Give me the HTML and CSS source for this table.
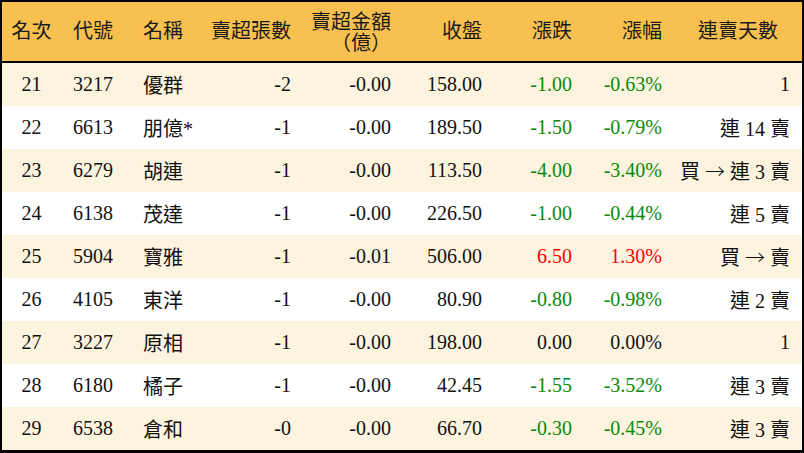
FILE: index.html
```html
<!DOCTYPE html>
<html lang="zh-Hant">
<head>
<meta charset="utf-8">
<title>賣超排行</title>
<link rel="stylesheet" href="styles.css">
</head>
<body>
<div class="board">
  <div class="row head">
    <div class="c c1">名次</div>
    <div class="c c2">代號</div>
    <div class="c c3">名稱</div>
    <div class="c num">賣超張數</div>
    <div class="c num two">賣超金額<br>（億）</div>
    <div class="c num">收盤</div>
    <div class="c num">漲跌</div>
    <div class="c num">漲幅</div>
    <div class="c c9h">連賣天數</div>
  </div>
  <div class="row alt">
    <div class="c c1">21</div><div class="c c2">3217</div><div class="c c3">優群</div>
    <div class="c num">-2</div><div class="c num">-0.00</div><div class="c num">158.00</div>
    <div class="c num dn">-1.00</div><div class="c num dn">-0.63%</div><div class="c num">1</div>
  </div>
  <div class="row">
    <div class="c c1">22</div><div class="c c2">6613</div><div class="c c3">朋億*</div>
    <div class="c num">-1</div><div class="c num">-0.00</div><div class="c num">189.50</div>
    <div class="c num dn">-1.50</div><div class="c num dn">-0.79%</div><div class="c num">連 14 賣</div>
  </div>
  <div class="row alt">
    <div class="c c1">23</div><div class="c c2">6279</div><div class="c c3">胡連</div>
    <div class="c num">-1</div><div class="c num">-0.00</div><div class="c num">113.50</div>
    <div class="c num dn">-4.00</div><div class="c num dn">-3.40%</div><div class="c num">買 <span class="arr">→</span> 連 3 賣</div>
  </div>
  <div class="row">
    <div class="c c1">24</div><div class="c c2">6138</div><div class="c c3">茂達</div>
    <div class="c num">-1</div><div class="c num">-0.00</div><div class="c num">226.50</div>
    <div class="c num dn">-1.00</div><div class="c num dn">-0.44%</div><div class="c num">連 5 賣</div>
  </div>
  <div class="row alt">
    <div class="c c1">25</div><div class="c c2">5904</div><div class="c c3">寶雅</div>
    <div class="c num">-1</div><div class="c num">-0.01</div><div class="c num">506.00</div>
    <div class="c num up">6.50</div><div class="c num up">1.30%</div><div class="c num">買 <span class="arr">→</span> 賣</div>
  </div>
  <div class="row">
    <div class="c c1">26</div><div class="c c2">4105</div><div class="c c3">東洋</div>
    <div class="c num">-1</div><div class="c num">-0.00</div><div class="c num">80.90</div>
    <div class="c num dn">-0.80</div><div class="c num dn">-0.98%</div><div class="c num">連 2 賣</div>
  </div>
  <div class="row alt">
    <div class="c c1">27</div><div class="c c2">3227</div><div class="c c3">原相</div>
    <div class="c num">-1</div><div class="c num">-0.00</div><div class="c num">198.00</div>
    <div class="c num">0.00</div><div class="c num">0.00%</div><div class="c num">1</div>
  </div>
  <div class="row">
    <div class="c c1">28</div><div class="c c2">6180</div><div class="c c3">橘子</div>
    <div class="c num">-1</div><div class="c num">-0.00</div><div class="c num">42.45</div>
    <div class="c num dn">-1.55</div><div class="c num dn">-3.52%</div><div class="c num">連 3 賣</div>
  </div>
  <div class="row alt">
    <div class="c c1">29</div><div class="c c2">6538</div><div class="c c3">倉和</div>
    <div class="c num">-0</div><div class="c num">-0.00</div><div class="c num">66.70</div>
    <div class="c num dn">-0.30</div><div class="c num dn">-0.45%</div><div class="c num">連 3 賣</div>
  </div>
</div>
</body>
</html>
```
FILE: styles.css
```css
* { box-sizing: border-box; }
html, body { margin: 0; padding: 0; background: #000; }
body {
  width: 804px;
  height: 453px;
  font-family: "Liberation Serif", "Noto Sans CJK TC", serif;
  font-size: 20px;
  color: #111;
}
.board {
  width: 804px;
  height: 453px;
  border: 2px solid #000;
  border-bottom-width: 3px;
  background: #fff;
  display: flex;
  flex-direction: column;
}
.row {
  display: grid;
  grid-template-columns: 59px 70px 69px 103px 100px 91px 90px 90px 128px;
  height: 43px;
  align-items: center;
  background: #fff;
}
.row.alt { background: #fdf4e0; }
.row.head {
  height: 61px;
  background: #f8c04f;
  border-bottom: 2px solid #000;
  color: #1a1a1a;
  line-height: 21px;
}
.c { white-space: nowrap; }
.c1 { text-align: center; }
.c2 { padding-left: 12px; }
.c3 { padding-left: 12px; }
.num { text-align: right; padding-right: 12px; }
.c9h { text-align: center; padding-right: 0; }
.two { line-height: 21px; padding-top: 2px; }
.arr { font-family: "Noto Sans CJK TC", sans-serif; font-weight: 300; }
.dn { color: #0a8a0a; }
.up { color: #ff0000; }
```
